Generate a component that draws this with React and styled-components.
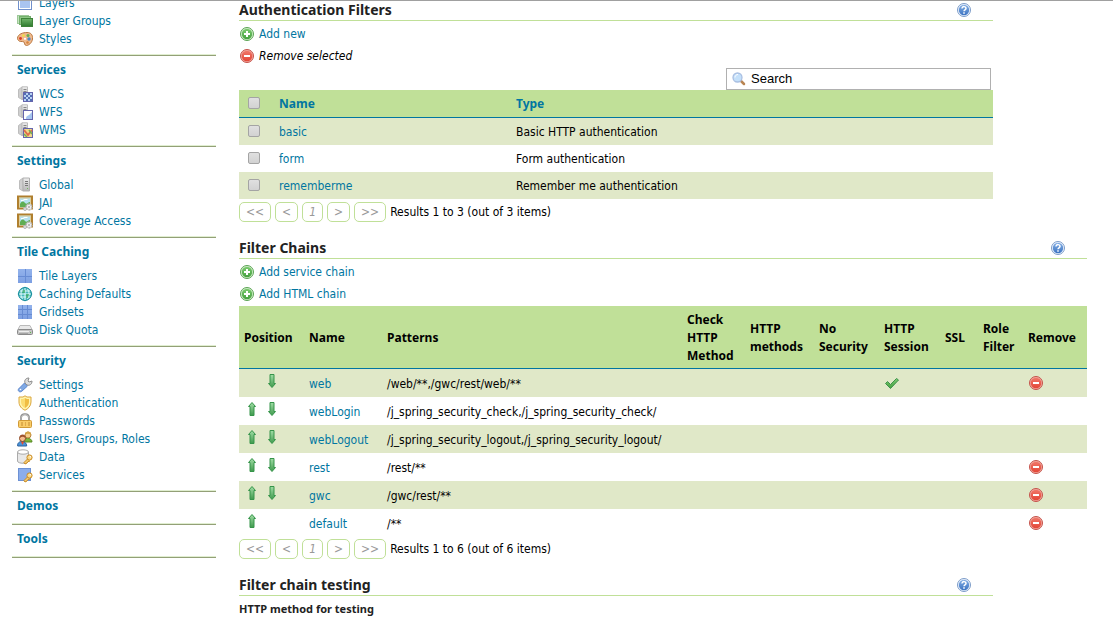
import React from 'react';
import styled, { createGlobalStyle } from 'styled-components';

const GlobalStyle = createGlobalStyle`
  * {
    box-sizing: border-box;
  }

  body {
    margin: 0;
    background: #fff;
    color: #000;
    font-family: Tahoma, 'DejaVu Sans Condensed', 'DejaVu Sans', sans-serif;
    font-size: 12px;
    line-height: 18px;
  }

  button, input {
    font: inherit;
  }
`;

const Page = styled.div`
  display: flex;
  gap: 23px;
  padding: 0 26px 0 12px;
  border-top: 1px solid #a0a0a0;
  overflow: hidden;
`;

const Sidebar = styled.nav`
  flex: 0 0 204px;
  margin-top: -7px;
`;

const MenuSection = styled.section`
  padding-bottom: 7px;
  border-bottom: 1px solid #93a077;
  box-shadow: inset 0 -1px #e0eed0;
  margin-bottom: 1px;
`;

const MenuTitle = styled.h3`
  margin: 0;
  padding: 4px 5px 2px;
  color: #0076a1;
  font-family: Tahoma, 'Noto Sans', sans-serif;
  font-size: 12px;
  line-height: 18px;
`;

const MenuList = styled.ul`
  margin: ${({ $first }) => ($first ? '0' : '4px 0 0')};
  padding: 0 5px;
  list-style: none;
`;

const MenuLink = styled.a`
  display: flex;
  align-items: center;
  gap: 6px;
  height: 18px;
  color: #0076a1;
  text-decoration: none;
`;

const Main = styled.main`
  flex: 1;
  min-width: 0;
  margin-top: -1px;
`;

const Panel = styled.section`
  margin: 0 ${({ $narrow }) => ($narrow ? '94px' : '0')} 16px 0;
`;

const PanelHeader = styled.header`
  display: flex;
  justify-content: space-between;
  align-items: center;
  padding-right: 21px;
  border-bottom: 1px solid #c0e098;
`;

const PanelTitle = styled.h2`
  margin: 0;
  color: #222;
  font-family: Tahoma, 'Noto Sans', sans-serif;
  font-size: 14px;
  line-height: 20px;
`;

const HelpLink = styled.a`
  display: flex;
`;

const Actions = styled.ul`
  margin: 0;
  padding: 2px 0 1px;
  list-style: none;
`;

const Action = styled.li`
  display: flex;
  height: 22px;
`;

const ActionLink = styled.a`
  display: flex;
  align-items: center;
  gap: 4px;
  color: #0076a1;
  text-decoration: none;
`;

const ActionButton = styled.button`
  display: flex;
  align-items: center;
  gap: 4px;
  padding: 0;
  border: 0;
  background: none;
  color: #000;
  font-style: italic;
`;

const SearchBox = styled.label`
  display: flex;
  align-items: center;
  gap: 4px;
  width: 265px;
  height: 22px;
  margin: 0 2px 0 auto;
  padding: 0 4px;
  border: 1px solid #b0b0b0;
`;

const SearchInput = styled.input`
  flex: 1;
  min-width: 0;
  padding: 0;
  border: 0;
  outline: 0;
  color: #000;
  font-family: Arial, 'Liberation Sans', sans-serif;
  font-size: 13px;
`;

const Table = styled.table`
  width: 100%;
  border-collapse: separate;
  border-spacing: 0;
  table-layout: fixed;
`;

const Col = styled.col`
  width: ${({ $width }) => ($width ? `${$width}px` : 'auto')};
`;

const HeadCell = styled.th`
  height: ${({ $tall }) => ($tall ? '63px' : '28px')};
  padding: ${({ $tall }) => ($tall ? '2px 5px 0' : '0 5px')};
  border-bottom: 1px solid #0076a1;
  background: #c0e098;
  font-family: Tahoma, 'Noto Sans', sans-serif;
  text-align: left;
`;

const Row = styled.tr`
  height: ${({ $tall }) => ($tall ? '28px' : '27px')};

  &:nth-child(odd) {
    background: #e0e8c8;
  }
`;

const Cell = styled.td`
  padding: ${({ $low }) => ($low ? '2px 5px 0' : '0 5px')};
  white-space: nowrap;
`;

const TableLink = styled.a`
  color: #0076a1;
  text-decoration: none;
`;

const IconButton = styled.button`
  display: block;
  width: 16px;
  height: 16px;
  padding: 0;
  border: 0;
  background: none;
`;

const Arrows = styled.div`
  display: grid;
  grid-template-columns: 16px 16px;
  gap: 4px;
  padding-bottom: 2px;
`;

const ArrowSlot = styled.span`
  display: block;
  height: 16px;
`;

const Checkbox = styled.input.attrs({ type: 'checkbox' })`
  appearance: none;
  display: block;
  width: 12px;
  height: 12px;
  margin: 0 0 2px 4px;
  border: 1px solid #a4a4a4;
  border-radius: 2px;
  background: linear-gradient(#e0e0e0, #d2d2d2);
`;

const Pager = styled.div`
  display: flex;
  align-items: center;
  gap: 4px;
  padding-top: ${({ $tight }) => ($tight ? '2px' : '3px')};
`;

const PagerButton = styled.button`
  height: 20px;
  padding: 0 6px;
  border: 1px solid #c0e098;
  border-radius: 5px;
  background: #fff;
  color: #999;
  font-style: italic;
  line-height: 18px;
`;

const FieldTitle = styled.h4`
  margin: 4px 0 0;
  color: #222;
  font-family: Tahoma, 'Noto Sans', sans-serif;
  font-size: 11px;
  line-height: 18px;
`;

const Svg = styled.svg`
  display: block;
  flex: none;
  width: 16px;
  height: 16px;
`;

const Defs = styled.svg`
  display: block;
  width: 0;
  height: 0;
`;

const Gradient = ({ id, from, to }) => (
  <linearGradient id={id} x1="0" y1="0" x2="0" y2="1">
    <stop offset="0" stopColor={from} />
    <stop offset="1" stopColor={to} />
  </linearGradient>
);

const server = (
  <>
    <path d="M1.500 3.500 5 1v12.500l-3.500-2z" fill="#cfcfcf" stroke="#bdbdbd" />
    <path d="M5 .8h5.500v12.700H5z" fill="url(#gServer)" stroke="#bdbdbd" />
    <path d="M6.500 3.500h3M6.500 5.500h3" stroke="#888" />
  </>
);

const key = (
  <>
    <path d="M11 9.500 7 13.500l1 1.500 2-1 1-1.500 2-.500" fill="#f6cd70" stroke="#c98a22" />
    <circle cx="12.500" cy="8.500" r="2.600" fill="#fbd987" stroke="#c98a22" />
    <circle cx="13.300" cy="7.800" r=".8" fill="#fff" />
  </>
);

const picture = (
  <>
    <rect x="1" y="1.500" width="14" height="12" fill="#b5e2f0" stroke="#b07f2e" strokeWidth="2" />
    <rect x="2.500" y="3" width="11" height="9" fill="none" stroke="#e8c987" strokeWidth=".8" />
    <path d="M3 9c2-3 3-3 5-1s3-1 5-1v5H3z" fill="#5fae54" />
    <path d="M4 5.500h2L7.500 4.500h3" stroke="#fff" strokeWidth="1.200" fill="none" />
    <circle cx="12" cy="12" r="2.900" fill="#efefef" stroke="#b5b5b5" strokeDasharray="2 1" strokeWidth="1.500" />
    <circle cx="12" cy="12" r="1" fill="#aaa" />
    <circle cx="8" cy="14" r="1.500" fill="#e3e3e3" stroke="#b5b5b5" />
  </>
);

const shapes = {
  layers: (
    <>
      <rect x="1.500" y="1.500" width="13" height="13" fill="#fff" stroke="#7090cc" />
      <rect x="3" y="3" width="10" height="10" fill="#a9c4f0" />
    </>
  ),
  groups: (
    <>
      <rect x=".5" y="2.500" width="11" height="8" fill="#c4e2bf" stroke="#9cc897" />
      <rect x="2.500" y="3.500" width="11" height="8" fill="#8ec787" stroke="#74b06d" />
      <rect x="4.500" y="5.500" width="11" height="8" fill="url(#gGreen)" stroke="#3d8238" />
    </>
  ),
  palette: (
    <>
      <path
        d="M.5 7C1 3 6 1.500 10 1.500c4 0 6 2.500 5.500 6.500-.5 4-4 6.500-6 6.500-2.500 0-1.500-3-2.500-3.500-2-1-4.500 0-5.500-1.500-1-1-1-1.500-1-2.500z"
        fill="#efb98d"
        stroke="#b9763f"
      />
      <circle cx="3.500" cy="7.500" r="1.400" fill="#d93d22" />
      <circle cx="6.500" cy="4.500" r="1.300" fill="#f2df42" />
      <circle cx="11" cy="4.500" r="1.500" fill="#65af52" />
      <circle cx="12" cy="8" r="1.700" fill="#4c86c8" />
      <circle cx="8" cy="7.800" r="1.100" fill="#fff" />
      <circle cx="10.500" cy="11.500" r="1.300" fill="#d6843c" />
    </>
  ),
  wcs: (
    <>
      {server}
      <rect x="6.500" y="6.500" width="9" height="9" fill="#b7d0f3" stroke="#6565ad" />
      <path d="M7 7h2v2H7zM11 7h2v2h-2zM9 9h2v2H9zM13 9h2v2h-2zM7 11h2v2H7zM11 11h2v2h-2zM9 13h2v2H9zM13 13h2v2h-2z" fill="#536eb4" />
    </>
  ),
  wfs: (
    <>
      {server}
      <rect x="6.500" y="6.500" width="9" height="9" fill="#fff" stroke="#6565ad" />
      <path d="M15 8v7H9c0-4 3-3 4-5z" fill="#a5c5ef" />
    </>
  ),
  wms: (
    <>
      {server}
      <rect x="6.500" y="6.500" width="9" height="9" fill="#f1d98a" stroke="#6565ad" />
      <path d="m7 8 4 5 4-5" stroke="#df6c4a" strokeWidth="2" fill="none" />
      <path d="m7 12 3 3M12 8l3 4" stroke="#74ae55" strokeWidth="1.500" />
    </>
  ),
  server: (
    <>
      <path d="M2.500 3.500 6 1v13l-3.500-2z" fill="#cfcfcf" stroke="#bdbdbd" />
      <path d="M6 1h6.500v13H6z" fill="url(#gServer)" stroke="#b0b0b0" />
      <path d="M8 4.500h3M8 6.500h3M8 8.500h3" stroke="#777" />
      <path d="M10 11h1v1h-1z" fill="#70b960" />
    </>
  ),
  picture,
  tiles: (
    <>
      <rect x="1" y="1" width="14" height="14" fill="url(#gTile)" />
      <path d="M1 8.500h14M8.500 1v14" stroke="#678cd4" />
      <path d="M9 11.500h6M11.500 9v6" stroke="#82a4e2" />
    </>
  ),
  globe: (
    <>
      <path d="m8 .5 7.500 7.500L8 15.500.5 8z" fill="#48b9bd" />
      <circle cx="8" cy="8" r="6.500" fill="#48b9bd" stroke="#168b9c" />
      <path d="M8 2v12M2 8h12M5.500 3c-2 3-2 7 0 10M10.500 3c2 3 2 7 0 10M3 5h10M3 11h10" stroke="#dff9f9" fill="none" />
      <path d="M6 4h2v3H5zM9 8h3l-1 4H9z" fill="#36a760" opacity=".7" />
    </>
  ),
  grid: (
    <>
      <rect x="1" y="1" width="14" height="14" fill="url(#gTile)" />
      <path d="M5.500 1v14M10.500 1v14M1 5.500h14M1 10.500h14" stroke="#668bd2" />
    </>
  ),
  disk: (
    <>
      <path d="M3 3.500h10l2 4H1z" fill="#e9e9e9" stroke="#bbb" />
      <rect x=".5" y="7.500" width="15" height="5" rx="1" fill="#c4c4c4" stroke="#8a8a8a" />
      <path d="M2 9.500h10" stroke="#eee" />
      <path d="M2 11.500h9" stroke="#a5a5a5" />
      <path d="M13 10h1v1h-1z" fill="#62bb4e" />
    </>
  ),
  wrench: (
    <>
      <path d="m1.500 12 6-6 3 3-6 5.500c-2 1-4-.5-3-2.500z" fill="#7fa8e3" stroke="#5c86cc" />
      <path d="M8 6c-1-3 1-5 4-5l-1 3 1 1 3-1c0 3-2 5-5 4z" fill="#ddd" stroke="#909090" />
      <circle cx="3.500" cy="12.500" r=".8" fill="#fff" />
    </>
  ),
  shield: (
    <>
      <path d="m8 .8 2 1.200h4v5c0 4-3 7-6 8.200C5 14 2 11 2 7V2h4z" fill="#fff4b0" stroke="#dba63d" />
      <path d="m8 3 2 1h2v3c0 3-2 5-4 6z" fill="#f0bd42" />
      <path d="m8 3-2 1H4v3c0 3 2 5 4 6z" fill="#fbdc70" />
    </>
  ),
  lock: (
    <>
      <path d="M4 8V5c0-5 8-5 8 0v3" fill="none" stroke="#8b8b8b" strokeWidth="2" />
      <path d="M4 7V5c0-4.500 8-4.500 8 0v2" fill="none" stroke="#ddd" strokeWidth=".7" />
      <rect x="1.500" y="7.500" width="13" height="7" rx="1" fill="#f9cc68" stroke="#d09a38" />
      <path d="M4 10h2M8 10h1M11 10h2M4 12h2M8 12h1M11 12h2" stroke="#c58a30" />
    </>
  ),
  users: (
    <>
      <path d="M6 11c0-5 9-5 9 0z" fill="#7bb83a" stroke="#568823" />
      <circle cx="11" cy="4" r="3" fill="#f6cd8c" stroke="#ba8337" />
      <path d="M8 4c0-5 7-4 6 0-2-1-4-2-6 0z" fill="#d5a344" />
      <path d="M.7 15c-1-6 9-6 9 0z" fill="#4b94d9" stroke="#2c609c" />
      <circle cx="5.500" cy="7.500" r="3" fill="#f4bb8d" stroke="#8b4928" />
      <path d="M2.500 7c0-5 7-4 6 0-2-2-4-1-6 0z" fill="#9c512c" />
      <path d="m4 11 1.500 3L7 11z" fill="#e44d2e" />
    </>
  ),
  data: (
    <>
      <path d="M.5 3v9c0 3 11 3 11 0V3" fill="#e8e8e8" stroke="#aaa" />
      <ellipse cx="6" cy="3" rx="5.500" ry="2.200" fill="#fff" stroke="#aaa" />
      {key}
    </>
  ),
  services: (
    <>
      <rect x="1.500" y="1.500" width="12" height="12" fill="#8badeb" stroke="#6d91d4" />
      {key}
    </>
  ),
  add: (
    <>
      <circle cx="8" cy="8" r="6.500" fill="#d5efcd" stroke="#5aa353" />
      <circle cx="8" cy="8" r="5.200" fill="url(#gAdd)" />
      <path d="M8 5v6M5 8h6" stroke="#fff" strokeWidth="2" />
    </>
  ),
  remove: (
    <>
      <circle cx="8" cy="8" r="6.500" fill="#f4aaa0" stroke="#c4524a" />
      <circle cx="8" cy="8" r="5.300" fill="url(#gRemove)" />
      <path d="M5 8h6" stroke="#fff" strokeWidth="2" />
    </>
  ),
  help: (
    <>
      <circle cx="8" cy="8" r="6.500" fill="#edf4ff" stroke="#7c9cc8" />
      <circle cx="8" cy="8" r="5.200" fill="url(#gHelp)" />
      <path d="M6 6.500c0-2.600 4-2.400 4 0C10 8 8 7.800 8 9.300M8 10.300v1.500" fill="none" stroke="#fff" strokeWidth="1.500" />
    </>
  ),
  search: (
    <>
      <path d="m10 10 3 3" stroke="#b98552" strokeWidth="2.500" strokeLinecap="round" />
      <circle cx="6.500" cy="6.500" r="4.500" fill="#c4e0fa" stroke="#a9bfe2" strokeWidth="1.300" />
      <path d="M4 6.500c0-2 1.500-3 3-3" stroke="#fff" fill="none" />
    </>
  ),
  up: <path d="m8 .5 3.500 4H10V13.500H6V4.500H4.500z" fill="url(#gArrow)" stroke="#36944a" />,
  down: <path d="M6 .5h4v9h1.500L8 13.500l-3.500-4H6z" fill="url(#gArrow)" stroke="#36944a" />,
  check: (
    <path d="m1.500 8.500 2-2L6.500 9.500l6-6 2 1.500-8 8.500z" fill="url(#gAdd)" stroke="#3c914c" />
  ),
};

const Icon = ({ name }) => (
  <Svg viewBox="0 0 16 16" aria-hidden="true">
    {shapes[name]}
  </Svg>
);

const menu = [
  { items: [['Layers', 'layers'], ['Layer Groups', 'groups'], ['Styles', 'palette']] },
  { title: 'Services', items: [['WCS', 'wcs'], ['WFS', 'wfs'], ['WMS', 'wms']] },
  { title: 'Settings', items: [['Global', 'server'], ['JAI', 'picture'], ['Coverage Access', 'picture']] },
  {
    title: 'Tile Caching',
    items: [['Tile Layers', 'tiles'], ['Caching Defaults', 'globe'], ['Gridsets', 'grid'], ['Disk Quota', 'disk']],
  },
  {
    title: 'Security',
    items: [
      ['Settings', 'wrench'],
      ['Authentication', 'shield'],
      ['Passwords', 'lock'],
      ['Users, Groups, Roles', 'users'],
      ['Data', 'data'],
      ['Services', 'services'],
    ],
  },
  { title: 'Demos', items: [] },
  { title: 'Tools', items: [] },
];

const filters = [
  ['basic', 'Basic HTTP authentication'],
  ['form', 'Form authentication'],
  ['rememberme', 'Remember me authentication'],
];

const chainColumns = [
  ['Position', 65],
  ['Name', 78],
  ['Patterns'],
  ['Check HTTP Method', 63],
  ['HTTP methods', 69],
  ['No Security', 65],
  ['HTTP Session', 61],
  ['SSL', 38],
  ['Role Filter', 45],
  ['Remove', 64],
];

const chains = [
  { name: 'web', patterns: '/web/**,/gwc/rest/web/**', session: true, removable: true },
  { name: 'webLogin', patterns: '/j_spring_security_check,/j_spring_security_check/' },
  { name: 'webLogout', patterns: '/j_spring_security_logout,/j_spring_security_logout/' },
  { name: 'rest', patterns: '/rest/**', removable: true },
  { name: 'gwc', patterns: '/gwc/rest/**', removable: true },
  { name: 'default', patterns: '/**', removable: true },
];

const Header = ({ title }) => (
  <PanelHeader>
    <PanelTitle>{title}</PanelTitle>
    <HelpLink href="#help" aria-label="Help">
      <Icon name="help" />
    </HelpLink>
  </PanelHeader>
);

const AddLink = ({ children }) => (
  <Action>
    <ActionLink href="#add">
      <Icon name="add" />
      {children}
    </ActionLink>
  </Action>
);

const Pagination = ({ count, tight }) => (
  <Pager $tight={tight}>
    {['<<', '<', '1', '>', '>>'].map(label => (
      <PagerButton key={label} type="button">
        {label}
      </PagerButton>
    ))}
    <span>{`Results 1 to ${count} (out of ${count} items)`}</span>
  </Pager>
);

const Menu = () => (
  <Sidebar>
    {menu.map(({ title, items }) => (
      <MenuSection key={title || 'data'}>
        {title && <MenuTitle>{title}</MenuTitle>}
        {items.length > 0 && (
          <MenuList $first={!title}>
            {items.map(([label, icon]) => (
              <li key={label}>
                <MenuLink href="#menu">
                  <Icon name={icon} />
                  {label}
                </MenuLink>
              </li>
            ))}
          </MenuList>
        )}
      </MenuSection>
    ))}
  </Sidebar>
);

const FilterTable = () => (
  <Table>
    <colgroup>
      <Col $width={35} />
      <Col $width={237} />
      <Col />
    </colgroup>
    <thead>
      <tr>
        <HeadCell>
          <Checkbox aria-label="Select all" />
        </HeadCell>
        <HeadCell>
          <TableLink href="#name">Name</TableLink>
        </HeadCell>
        <HeadCell>
          <TableLink href="#type">Type</TableLink>
        </HeadCell>
      </tr>
    </thead>
    <tbody>
      {filters.map(([name, type]) => (
        <Row key={name}>
          <Cell>
            <Checkbox aria-label={name} />
          </Cell>
          <Cell>
            <TableLink href="#filter">{name}</TableLink>
          </Cell>
          <Cell>{type}</Cell>
        </Row>
      ))}
    </tbody>
  </Table>
);

const ChainTable = () => (
  <Table>
    <colgroup>
      {chainColumns.map(([label, width]) => (
        <Col key={label} $width={width} />
      ))}
    </colgroup>
    <thead>
      <tr>
        {chainColumns.map(([label]) => (
          <HeadCell key={label} $tall>
            {label}
          </HeadCell>
        ))}
      </tr>
    </thead>
    <tbody>
      {chains.map(({ name, patterns, session, removable }, index) => (
        <Row key={name} $tall>
          <Cell>
            <Arrows>
              <ArrowSlot>
                {index > 0 && (
                  <IconButton type="button" aria-label="Move up">
                    <Icon name="up" />
                  </IconButton>
                )}
              </ArrowSlot>
              <ArrowSlot>
                {index < chains.length - 1 && (
                  <IconButton type="button" aria-label="Move down">
                    <Icon name="down" />
                  </IconButton>
                )}
              </ArrowSlot>
            </Arrows>
          </Cell>
          <Cell $low>
            <TableLink href="#chain">{name}</TableLink>
          </Cell>
          <Cell $low>{patterns}</Cell>
          <Cell />
          <Cell />
          <Cell />
          <Cell>{session && <Icon name="check" />}</Cell>
          <Cell />
          <Cell />
          <Cell>
            {removable && (
              <IconButton type="button" aria-label="Remove">
                <Icon name="remove" />
              </IconButton>
            )}
          </Cell>
        </Row>
      ))}
    </tbody>
  </Table>
);

const App = () => (
  <>
    <GlobalStyle />
    <Page>
      <Menu />
      <Main>
        <Panel $narrow>
          <Header title="Authentication Filters" />
          <Actions>
            <AddLink>Add new</AddLink>
            <Action>
              <ActionButton type="button">
                <Icon name="remove" />
                Remove selected
              </ActionButton>
            </Action>
          </Actions>
          <SearchBox>
            <Icon name="search" />
            <SearchInput type="text" aria-label="Search" defaultValue="Search" />
          </SearchBox>
          <FilterTable />
          <Pagination count={3} />
        </Panel>
        <Panel>
          <Header title="Filter Chains" />
          <Actions>
            <AddLink>Add service chain</AddLink>
            <AddLink>Add HTML chain</AddLink>
          </Actions>
          <ChainTable />
          <Pagination count={6} tight />
        </Panel>
        <Panel $narrow>
          <Header title="Filter chain testing" />
          <FieldTitle>HTTP method for testing</FieldTitle>
        </Panel>
      </Main>
    </Page>
    <Defs aria-hidden="true">
      <defs>
        <Gradient id="gServer" from="#eeeeee" to="#b5b5b5" />
        <Gradient id="gGreen" from="#71b66b" to="#2e7a2e" />
        <Gradient id="gTile" from="#93b3ec" to="#7c9fe2" />
        <Gradient id="gAdd" from="#7ccb70" to="#45a03f" />
        <Gradient id="gRemove" from="#f0786a" to="#e34536" />
        <Gradient id="gHelp" from="#83aee4" to="#3d74c2" />
        <Gradient id="gArrow" from="#a0dda5" to="#3f9a4d" />
      </defs>
    </Defs>
  </>
);

export default App;
